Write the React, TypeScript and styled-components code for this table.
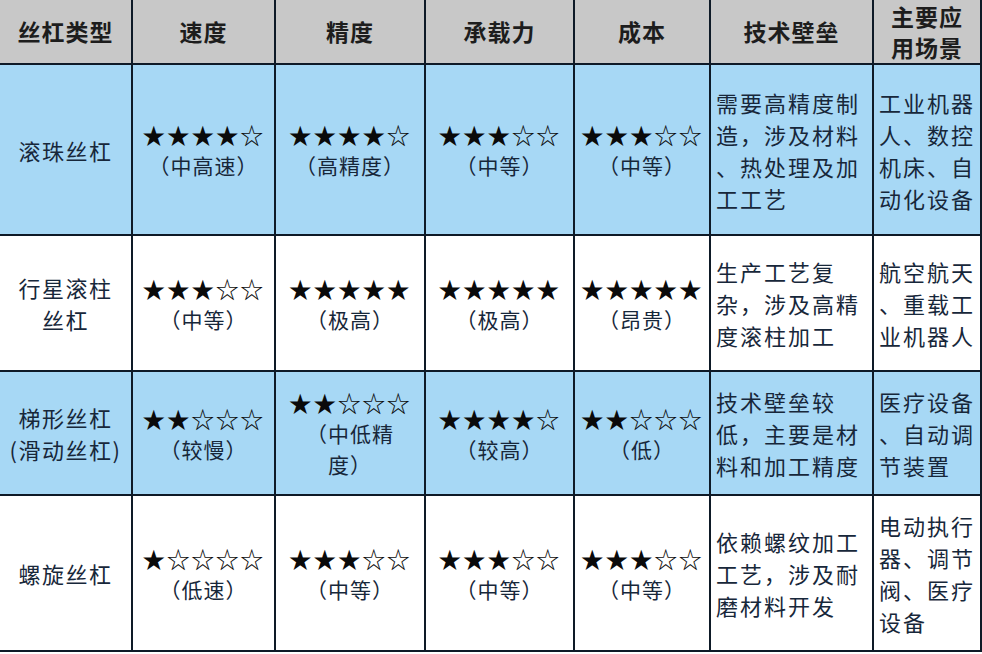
import React from 'react';
import styled, { createGlobalStyle } from 'styled-components';

const GlobalStyle = createGlobalStyle`
  html, body {
    margin: 0;
    padding: 0;
    background: #ffffff;
  }
  body {
    font-family: 'Noto Sans CJK SC', 'Liberation Serif', sans-serif;
  }
`;

type Tone = 'blue' | 'white';

const lineColor = '#0e1a27';
const headerBg = '#c8c8c8';
const blueBg = '#a7d8f5';

const Sheet = styled.div`
  display: grid;
  grid-template-columns: 131px 141px 148px 147px 134px 161px 106px;
  grid-template-rows: 63px 169px 134px 122px 154px;
  gap: 2px;
  width: 982px;
  box-sizing: border-box;
  padding: 0 2px 2px 0;
  background: ${lineColor};
`;

const HeaderCell = styled.div`
  display: flex;
  flex-direction: column;
  align-items: center;
  justify-content: center;
  background: ${headerBg};
  color: #1d1d1d;
  font-size: 23px;
  font-weight: 700;
  line-height: 31px;
  letter-spacing: 1px;
`;

const Cell = styled.div<{ $tone: Tone; $align?: 'center' | 'left' }>`
  display: flex;
  flex-direction: column;
  justify-content: center;
  align-items: ${props => (props.$align === 'left' ? 'flex-start' : 'center')};
  padding: ${props => (props.$align === 'left' ? '0 0 0 5px' : '0')};
  background: ${props => (props.$tone === 'blue' ? blueBg : '#ffffff')};
  color: #17273a;
  font-size: 22px;
  line-height: 32px;
  letter-spacing: ${props => (props.$align === 'left' ? '2px' : '1.5px')};
  white-space: nowrap;
`;

const Line = styled.span`
  display: block;
`;

const StarRow = styled.span`
  display: block;
  color: #0a0a0a;
  font-size: 23px;
  line-height: 32px;
  letter-spacing: 1.5px;
`;

const Note = styled.span`
  display: block;
  font-size: 21px;
  line-height: 31px;
  letter-spacing: 1px;
`;

interface Rating {
  stars: number;
  note: string[];
}

interface Row {
  tone: Tone;
  name: string[];
  speed: Rating;
  precision: Rating;
  load: Rating;
  cost: Rating;
  barrier: string[];
  apps: string[];
}

const headers = [['丝杠类型'], ['速度'], ['精度'], ['承载力'], ['成本'], ['技术壁垒'], ['主要应', '用场景']];

const rows: Row[] = [
  {
    tone: 'blue',
    name: ['滚珠丝杠'],
    speed: { stars: 4, note: ['（中高速）'] },
    precision: { stars: 4, note: ['（高精度）'] },
    load: { stars: 3, note: ['（中等）'] },
    cost: { stars: 3, note: ['（中等）'] },
    barrier: ['需要高精度制', '造，涉及材料', '、热处理及加', '工工艺'],
    apps: ['工业机器', '人、数控', '机床、自', '动化设备'],
  },
  {
    tone: 'white',
    name: ['行星滚柱', '丝杠'],
    speed: { stars: 3, note: ['（中等）'] },
    precision: { stars: 5, note: ['（极高）'] },
    load: { stars: 5, note: ['（极高）'] },
    cost: { stars: 5, note: ['（昂贵）'] },
    barrier: ['生产工艺复', '杂，涉及高精', '度滚柱加工'],
    apps: ['航空航天', '、重载工', '业机器人'],
  },
  {
    tone: 'blue',
    name: ['梯形丝杠', '(滑动丝杠)'],
    speed: { stars: 2, note: ['（较慢）'] },
    precision: { stars: 2, note: ['（中低精', '度）'] },
    load: { stars: 4, note: ['（较高）'] },
    cost: { stars: 2, note: ['（低）'] },
    barrier: ['技术壁垒较', '低，主要是材', '料和加工精度'],
    apps: ['医疗设备', '、自动调', '节装置'],
  },
  {
    tone: 'white',
    name: ['螺旋丝杠'],
    speed: { stars: 1, note: ['（低速）'] },
    precision: { stars: 3, note: ['（中等）'] },
    load: { stars: 3, note: ['（中等）'] },
    cost: { stars: 3, note: ['（中等）'] },
    barrier: ['依赖螺纹加工', '工艺，涉及耐', '磨材料开发'],
    apps: ['电动执行', '器、调节', '阀、医疗', '设备'],
  },
];

function Lines({ items }: { items: string[] }) {
  return (
    <>
      {items.map(text => (
        <Line key={text}>{text}</Line>
      ))}
    </>
  );
}

function RatingCell({ tone, rating }: { tone: Tone; rating: Rating }) {
  const stars = '★'.repeat(rating.stars) + '☆'.repeat(5 - rating.stars);
  return (
    <Cell $tone={tone}>
      <StarRow>{stars}</StarRow>
      {rating.note.map(text => (
        <Note key={text}>{text}</Note>
      ))}
    </Cell>
  );
}

export default function App() {
  return (
    <>
      <GlobalStyle />
      <Sheet>
        {headers.map(lines => (
          <HeaderCell key={lines.join('')}>
            <Lines items={lines} />
          </HeaderCell>
        ))}
        {rows.map(row => (
          <React.Fragment key={row.name.join('')}>
            <Cell $tone={row.tone}>
              <Lines items={row.name} />
            </Cell>
            <RatingCell tone={row.tone} rating={row.speed} />
            <RatingCell tone={row.tone} rating={row.precision} />
            <RatingCell tone={row.tone} rating={row.load} />
            <RatingCell tone={row.tone} rating={row.cost} />
            <Cell $tone={row.tone} $align="left">
              <Lines items={row.barrier} />
            </Cell>
            <Cell $tone={row.tone} $align="left">
              <Lines items={row.apps} />
            </Cell>
          </React.Fragment>
        ))}
      </Sheet>
    </>
  );
}
